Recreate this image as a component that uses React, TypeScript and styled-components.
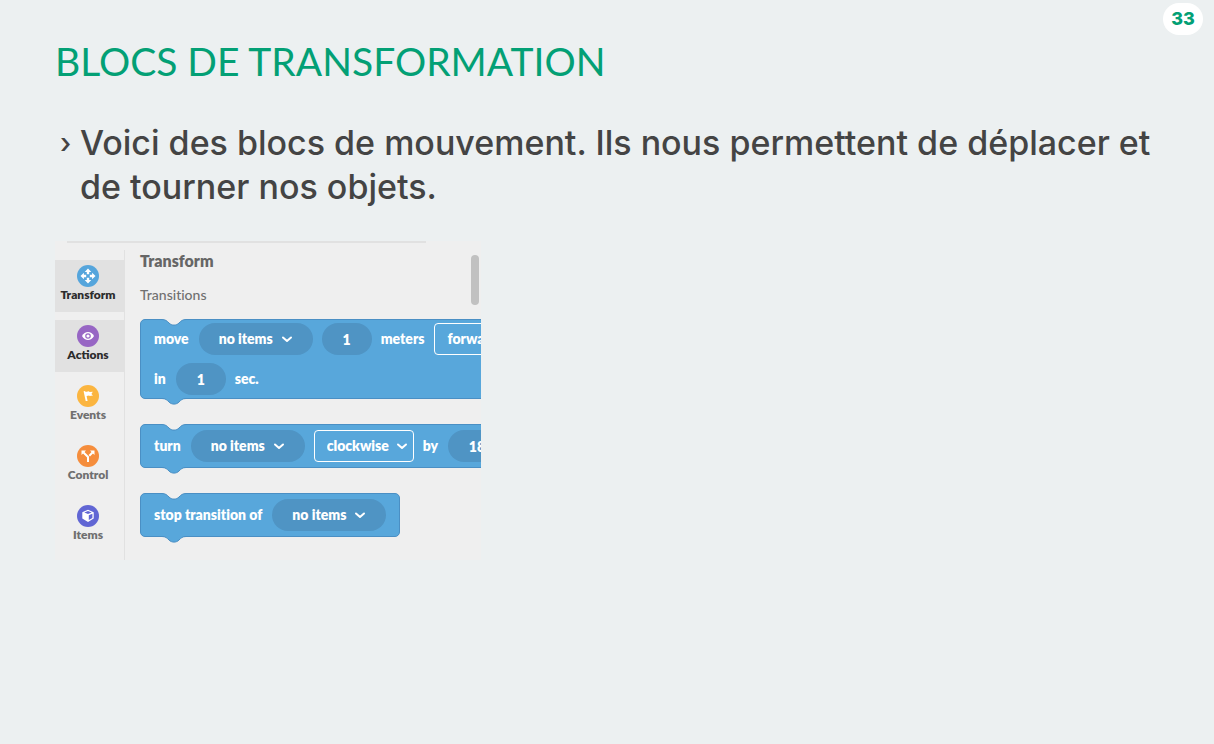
import React from 'react';
import styled, { createGlobalStyle } from 'styled-components';

const GlobalStyle = createGlobalStyle`
  * { box-sizing: border-box; }
  body { margin: 0; background: #ecf0f1; }
`;

const colors = {
  page: '#ecf0f1',
  green: '#03a075',
  text: '#444444',
  panel: '#efefef',
  divider: '#e1e1e1',
  block: '#58a7db',
  blockEdge: '#4a8fc4',
  field: '#4f94c4',
};

const Slide = styled.main`
  position: relative;
  min-height: 100vh;
  padding: 37px 55px;
  background: ${colors.page};
  color: ${colors.text};
  font-family: Inter, sans-serif;
`;

const PageNumber = styled.div`
  position: absolute;
  top: 3px;
  right: 11px;
  width: 40px;
  border-radius: 16px;
  background: #ffffff;
  color: ${colors.green};
  font-size: 18px;
  font-weight: 800;
  line-height: 32px;
  text-align: center;
`;

const Title = styled.h1`
  margin: 0 0 36px;
  color: ${colors.green};
  font: 400 39px/48px Lato, sans-serif;
`;

const Points = styled.ul`
  margin: 0 0 32px;
  padding: 0;
  list-style: none;
`;

const Point = styled.li`
  display: flex;
  font-size: 34px;
  font-weight: 500;
  line-height: 44px;
`;

const Bullet = styled.span`
  flex: none;
  width: 25px;
  padding-left: 5px;
  font-size: 28px;
  font-weight: 500;
`;

const Panel = styled.section`
  position: relative;
  max-width: 426px;
  overflow: hidden;
  background: ${colors.panel};
  font-family: Lato, sans-serif;
  font-variant-ligatures: none;

  &::before {
    content: '';
    display: block;
    height: 2px;
    margin: 0 55px 7px 12px;
    background: ${colors.divider};
  }
`;

const PanelBody = styled.div`
  display: flex;
`;

const Sidebar = styled.nav`
  display: flex;
  flex: none;
  flex-direction: column;
  gap: 8px;
  width: 70px;
  padding: 10px 0 8px;
  border-right: 1px solid ${colors.divider};
`;

const Category = styled.button<{ $active?: boolean }>`
  display: flex;
  flex-direction: column;
  align-items: center;
  height: 52px;
  padding: 5px 3px 0 0;
  border: 0;
  background: ${p => (p.$active ? '#e1e1e1' : 'transparent')};
  color: ${p => (p.$active ? '#2c2c2c' : '#707070')};
  font: 800 12px/16px Lato, sans-serif;
`;

const Palette = styled.div`
  flex: 1;
  min-width: 0;
  padding: 1px 0 0 15px;
`;

const PaletteTitle = styled.h2`
  margin: 0 0 14px;
  color: #666666;
  font-size: 16px;
  font-weight: 800;
  line-height: 20px;
`;

const GroupTitle = styled.h3`
  margin: 0 0 14px;
  color: #707070;
  font-size: 14px;
  font-weight: 500;
  line-height: 20px;
`;

const Stack = styled.div`
  display: flex;
  flex-direction: column;
  align-items: flex-start;
  gap: 25px;
`;

const BlockBox = styled.div<{ $tight?: boolean }>`
  position: relative;
  display: flex;
  flex-direction: column;
  gap: 8px;
  padding: ${p => (p.$tight ? '3px' : '5px')} 13px;
  border: 1px solid ${colors.blockEdge};
  border-radius: 5px;
  background: ${colors.block};
`;

const BlockRow = styled.div`
  display: flex;
  align-items: center;
  gap: 9px;
  height: 32px;
`;

const Connector = styled.svg<{ $bottom?: boolean }>`
  position: absolute;
  left: 20px;
  ${p => (p.$bottom ? 'bottom: -7px;' : 'top: -1px;')}
  width: 26px;
  height: 7px;
`;

const Word = styled.span`
  flex: none;
  padding-right: 1px;
  color: #ffffff;
  font-size: 14px;
  font-weight: 800;
  line-height: 20px;
  white-space: nowrap;
`;

const Field = styled.div`
  position: relative;
  flex: none;
`;

const Select = styled.select<{ $outlined?: boolean }>`
  display: block;
  width: ${p => (p.$outlined ? '100px' : '114px')};
  height: 32px;
  padding: 0 0 0 ${p => (p.$outlined ? '12px' : '20px')};
  appearance: none;
  border: ${p => (p.$outlined ? '1px solid #ffffff' : '0')};
  border-radius: ${p => (p.$outlined ? '4px' : '16px')};
  background: ${p => (p.$outlined ? 'transparent' : colors.field)};
  color: #ffffff;
  font: 800 14px/20px Lato, sans-serif;
`;

const Chevron = styled.svg<{ $outlined?: boolean }>`
  position: absolute;
  top: 12px;
  right: ${p => (p.$outlined ? '6px' : '20px')};
  width: 12px;
  height: 8px;
  pointer-events: none;
`;

const NumberField = styled.input<{ $wide?: boolean }>`
  flex: none;
  width: ${p => (p.$wide ? '66px' : '50px')};
  height: 32px;
  padding: 0;
  border: 0;
  border-radius: 16px;
  background: ${colors.field};
  color: #ffffff;
  font: 800 14px/20px Lato, sans-serif;
  text-align: center;
`;

const ScrollThumb = styled.div`
  position: absolute;
  top: 14px;
  right: 2px;
  width: 8px;
  height: 50px;
  border-radius: 4px;
  background: #c1c1c1;
`;

function Choice({ label, options, outlined }: { label: string; options: string[]; outlined?: boolean }) {
  return (
    <Field>
      <Select aria-label={label} $outlined={outlined}>
        {options.map(option => (
          <option key={option}>{option}</option>
        ))}
      </Select>
      <Chevron $outlined={outlined} viewBox="0 0 12 8" aria-hidden="true">
        <path d="M2 2.5 6 6 10 2.500" fill="none" stroke="#fff" strokeWidth="2" strokeLinecap="round" strokeLinejoin="round" />
      </Chevron>
    </Field>
  );
}

const bump = 'M0 0.5H1C4.500 0.500 6 2 8 4C10.500 6.800 15.500 6.800 18 4C20 2 21.500 0.500 25 0.500H26';

function Block({ tight, children }: { tight?: boolean; children: React.ReactNode }) {
  return (
    <BlockBox $tight={tight}>
      <Connector viewBox="0 0 26 7" aria-hidden="true">
        <path d={`${bump}V0H0Z`} fill={colors.panel} />
        <path d={bump} fill="none" stroke={colors.blockEdge} />
      </Connector>
      {children}
      <Connector $bottom viewBox="0 0 26 7" aria-hidden="true">
        <path d={`${bump}V0H0Z`} fill={colors.block} />
        <path d={bump} fill="none" stroke={colors.blockEdge} />
      </Connector>
    </BlockBox>
  );
}

const moveArrow = 'M11 3.500 14.300 6.900H12.200V9.200H9.800V6.900H7.700Z';

const icons: Record<string, React.ReactNode> = {
  Transform: (
    <g fill="#fff">
      {[0, 90, 180, 270].map(angle => (
        <path key={angle} d={moveArrow} transform={`rotate(${angle} 11 11)`} />
      ))}
    </g>
  ),
  Actions: (
    <g>
      <path d="M5 11C6.400 8.200 8.600 7 11 7S15.600 8.200 17 11C15.600 13.800 13.400 15 11 15S6.400 13.800 5 11Z" fill="#fff" />
      <circle cx="11" cy="11" r="2.2" fill="#fff" stroke="#9766c4" strokeWidth="1.2" />
    </g>
  ),
  Events: (
    <path d="M6.600 6.300 8.200 5.900 8.500 7 12 6.300 12.500 7.100 15.800 6.700 14.400 9 16 10.600 12.700 11.100 12.100 10.500 9.600 11.100 10.600 16H8.700Z" fill="#fff" />
  ),
  Control: (
    <g fill="none" stroke="#fff" strokeWidth="2">
      <path d="M6.500 7.500 11 12V17M15.500 7.500 12.300 10.700" />
      <path d="M4.500 5.500H9L4.500 10ZM17.500 5.500H13L17.500 10Z" fill="#fff" stroke="none" />
    </g>
  ),
  Items: (
    <g>
      <path d="M11 4.800 16.700 7.300V13.600L11 17 5.300 13.600V7.300Z" fill="#fff" />
      <path d="M7.300 7.500 11 6.100 14.700 7.500 11 9ZM11.800 10.300 15.400 8.800V12.900L11.800 15Z" fill="#6166d4" />
    </g>
  ),
};

const categories = [
  { name: 'Transform', color: '#55a5dc', active: true },
  { name: 'Actions', color: '#9766c4', active: true },
  { name: 'Events', color: '#fbb540' },
  { name: 'Control', color: '#f58d3c' },
  { name: 'Items', color: '#6166d4' },
];

export default function App() {
  return (
    <Slide>
      <GlobalStyle />
      <PageNumber>33</PageNumber>
      <Title>BLOCS DE TRANSFORMATION</Title>
      <Points>
        <Point>
          <Bullet aria-hidden="true">›</Bullet>
          <span>Voici des blocs de mouvement. Ils nous permettent de déplacer et de tourner nos objets.</span>
        </Point>
      </Points>
      <Panel>
        <PanelBody>
          <Sidebar>
            {categories.map(({ name, color, active }) => (
              <Category key={name} type="button" $active={active}>
                <svg width="22" height="22" viewBox="0 0 22 22" aria-hidden="true">
                  <circle cx="11" cy="11" r="11" fill={color} />
                  {icons[name]}
                </svg>
                {name}
              </Category>
            ))}
          </Sidebar>
          <Palette>
            <PaletteTitle>Transform</PaletteTitle>
            <GroupTitle>Transitions</GroupTitle>
            <Stack>
              <Block tight>
                <BlockRow>
                  <Word>move</Word>
                  <Choice label="Item to move" options={['no items']} />
                  <NumberField aria-label="Distance" defaultValue="1" />
                  <Word>meters</Word>
                  <Choice label="Direction" options={['forward']} outlined />
                </BlockRow>
                <BlockRow>
                  <Word>in</Word>
                  <NumberField aria-label="Duration" defaultValue="1" />
                  <Word>sec.</Word>
                </BlockRow>
              </Block>
              <Block>
                <BlockRow>
                  <Word>turn</Word>
                  <Choice label="Item to turn" options={['no items']} />
                  <Choice label="Rotation" options={['clockwise']} outlined />
                  <Word>by</Word>
                  <NumberField aria-label="Angle" defaultValue="180" $wide />
                </BlockRow>
              </Block>
              <Block>
                <BlockRow>
                  <Word>stop transition of</Word>
                  <Choice label="Item to stop" options={['no items']} />
                </BlockRow>
              </Block>
            </Stack>
          </Palette>
        </PanelBody>
        <ScrollThumb />
      </Panel>
    </Slide>
  );
}
